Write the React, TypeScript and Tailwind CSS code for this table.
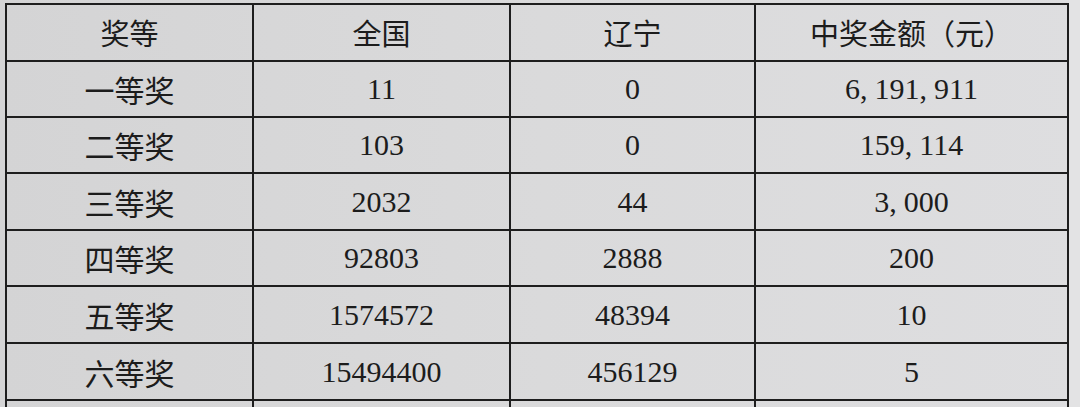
import React from "react";

const rows: [string, string, string, string][] = [
  ["一等奖", "11", "0", "6,191,911"],
  ["二等奖", "103", "0", "159,114"],
  ["三等奖", "2032", "44", "3,000"],
  ["四等奖", "92803", "2888", "200"],
  ["五等奖", "1574572", "48394", "10"],
  ["六等奖", "15494400", "456129", "5"],
];

const heights = ["h-[56px]", "h-[56px]", "h-[57px]", "h-[56px]", "h-[57px]", "h-[57px]"];

function Num({ v }: { v: string }) {
  const parts = v.split(",");
  return (
    <span className="font-['Liberation_Serif',serif] text-[30px] leading-none">
      {parts.map((p, i) => (
        <React.Fragment key={i}>
          {p}
          {i < parts.length - 1 && <span className="mr-[7px]">,</span>}
        </React.Fragment>
      ))}
    </span>
  );
}

const cjkHead = "font-['Noto_Sans_CJK_SC',sans-serif] text-[29px] leading-none font-normal";
const cjk = "font-['Noto_Sans_CJK_SC',sans-serif] text-[30px] leading-none font-normal";

export default function App() {
  const cell = "flex items-center justify-center border-r-2 border-b-2 border-[#1e1e1e]";
  return (
    <div className="w-[1080px] h-[407px] overflow-hidden bg-linear-to-r from-[#d4d4d5] via-[#dadadb] to-[#dedee0] text-[#1c1c1c]">
      <div className="flex">
        <div className="pl-[5px] pt-[3px]">
          <div className="grid grid-cols-[247px_257px_245px_313px] border-l-2 border-t-2 border-[#1e1e1e]">
            <div className={`${cell} h-[57px]`}><span className={cjkHead}>奖等</span></div>
            <div className={`${cell} h-[57px]`}><span className={cjkHead}>全国</span></div>
            <div className={`${cell} h-[57px]`}><span className={cjkHead}>辽宁</span></div>
            <div className={`${cell} h-[57px]`}><span className={cjkHead}>中奖金额（元）</span></div>
            {rows.map((r, i) => (
              <React.Fragment key={i}>
                <div className={`${cell} ${heights[i]}`}><span className={cjk}>{r[0]}</span></div>
                <div className={`${cell} ${heights[i]}`}><Num v={r[1]} /></div>
                <div className={`${cell} ${heights[i]}`}><Num v={r[2]} /></div>
                <div className={`${cell} ${heights[i]}`}><Num v={r[3]} /></div>
              </React.Fragment>
            ))}
            <div className={`${cell} h-[57px]`} />
            <div className={`${cell} h-[57px]`} />
            <div className={`${cell} h-[57px]`} />
            <div className={`${cell} h-[57px]`} />
          </div>
        </div>
        <div className="flex-1 h-[407px] bg-[#e3e3e4]" />
      </div>
    </div>
  );
}
